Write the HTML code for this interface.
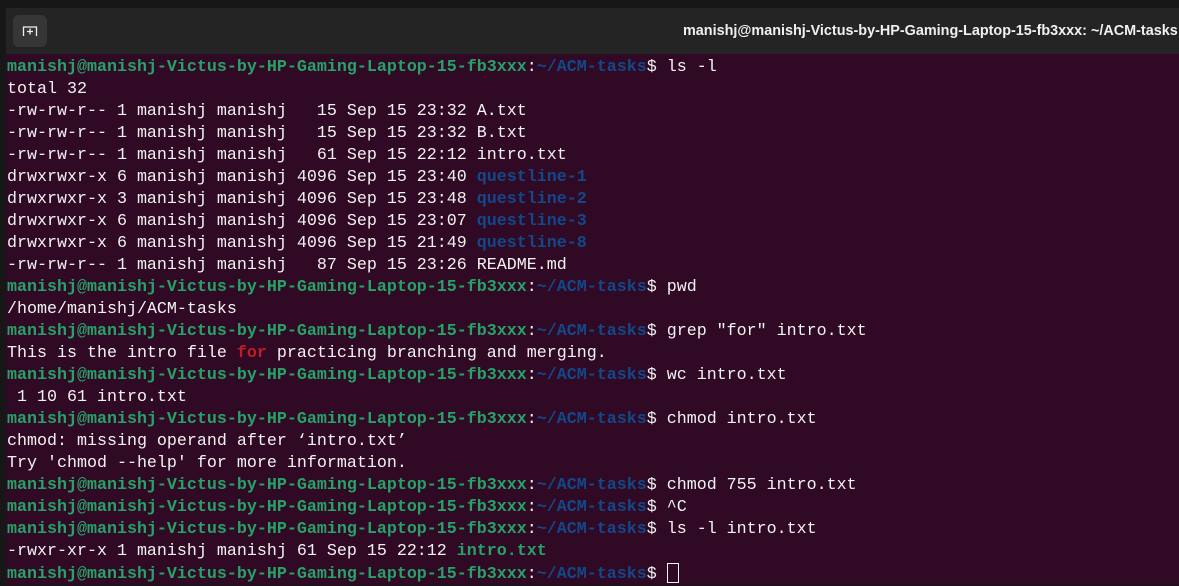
<!DOCTYPE html>
<html><head><meta charset="utf-8"><style>
html,body{margin:0;padding:0;width:1179px;height:585px;overflow:hidden;background:#171717;}
#hdr{position:absolute;left:6px;top:8px;width:1173px;height:46px;background:#242424;}
#btn{position:absolute;left:7px;top:7px;width:34px;height:32px;background:#363636;border-radius:6px;}
#title{position:absolute;left:677px;top:15px;white-space:nowrap;font:bold 14.4px "Liberation Sans",sans-serif;color:#f0f0f0;}
#body{position:absolute;left:6px;top:54px;width:1173px;height:531px;background:#300a24;}
pre{margin:0;position:absolute;left:1px;top:3px;font-family:"Liberation Mono",monospace;font-size:16.67px;line-height:22px;color:#f2f2f2;}
.g{color:#26a269;font-weight:bold}.b{color:#12488b;font-weight:bold}.r{color:#c01c28;font-weight:bold}
.cur{display:inline-block;height:20px;border:1px solid #f2f2f2;vertical-align:-5px;box-sizing:border-box;width:12px;}
</style></head><body>
<div id="hdr"><div id="btn"><svg width="34" height="32" viewBox="0 0 34 32"><path d="M10.5 21 V12 H23.5 V21 M17 13.5 v6 M14 16.5 h6" stroke="#eee" stroke-width="1.3" fill="none"/></svg></div>
<div id="title">manishj@manishj-Victus-by-HP-Gaming-Laptop-15-fb3xxx: ~/ACM-tasks</div></div>
<div id="body"><pre><span class="g">manishj@manishj-Victus-by-HP-Gaming-Laptop-15-fb3xxx</span>:<span class="b">~/ACM-tasks</span>$ ls -l
total 32
-rw-rw-r-- 1 manishj manishj   15 Sep 15 23:32 A.txt
-rw-rw-r-- 1 manishj manishj   15 Sep 15 23:32 B.txt
-rw-rw-r-- 1 manishj manishj   61 Sep 15 22:12 intro.txt
drwxrwxr-x 6 manishj manishj 4096 Sep 15 23:40 <span class="b">questline-1</span>
drwxrwxr-x 3 manishj manishj 4096 Sep 15 23:48 <span class="b">questline-2</span>
drwxrwxr-x 6 manishj manishj 4096 Sep 15 23:07 <span class="b">questline-3</span>
drwxrwxr-x 6 manishj manishj 4096 Sep 15 21:49 <span class="b">questline-8</span>
-rw-rw-r-- 1 manishj manishj   87 Sep 15 23:26 README.md
<span class="g">manishj@manishj-Victus-by-HP-Gaming-Laptop-15-fb3xxx</span>:<span class="b">~/ACM-tasks</span>$ pwd
/home/manishj/ACM-tasks
<span class="g">manishj@manishj-Victus-by-HP-Gaming-Laptop-15-fb3xxx</span>:<span class="b">~/ACM-tasks</span>$ grep "for" intro.txt
This is the intro file <span class="r">for</span> practicing branching and merging.
<span class="g">manishj@manishj-Victus-by-HP-Gaming-Laptop-15-fb3xxx</span>:<span class="b">~/ACM-tasks</span>$ wc intro.txt
 1 10 61 intro.txt
<span class="g">manishj@manishj-Victus-by-HP-Gaming-Laptop-15-fb3xxx</span>:<span class="b">~/ACM-tasks</span>$ chmod intro.txt
chmod: missing operand after ‘intro.txt’
Try 'chmod --help' for more information.
<span class="g">manishj@manishj-Victus-by-HP-Gaming-Laptop-15-fb3xxx</span>:<span class="b">~/ACM-tasks</span>$ chmod 755 intro.txt
<span class="g">manishj@manishj-Victus-by-HP-Gaming-Laptop-15-fb3xxx</span>:<span class="b">~/ACM-tasks</span>$ ^C
<span class="g">manishj@manishj-Victus-by-HP-Gaming-Laptop-15-fb3xxx</span>:<span class="b">~/ACM-tasks</span>$ ls -l intro.txt
-rwxr-xr-x 1 manishj manishj 61 Sep 15 22:12 <span class="g">intro.txt</span>
<span class="g">manishj@manishj-Victus-by-HP-Gaming-Laptop-15-fb3xxx</span>:<span class="b">~/ACM-tasks</span>$ <span class="cur"></span></pre></div>
</body></html>
